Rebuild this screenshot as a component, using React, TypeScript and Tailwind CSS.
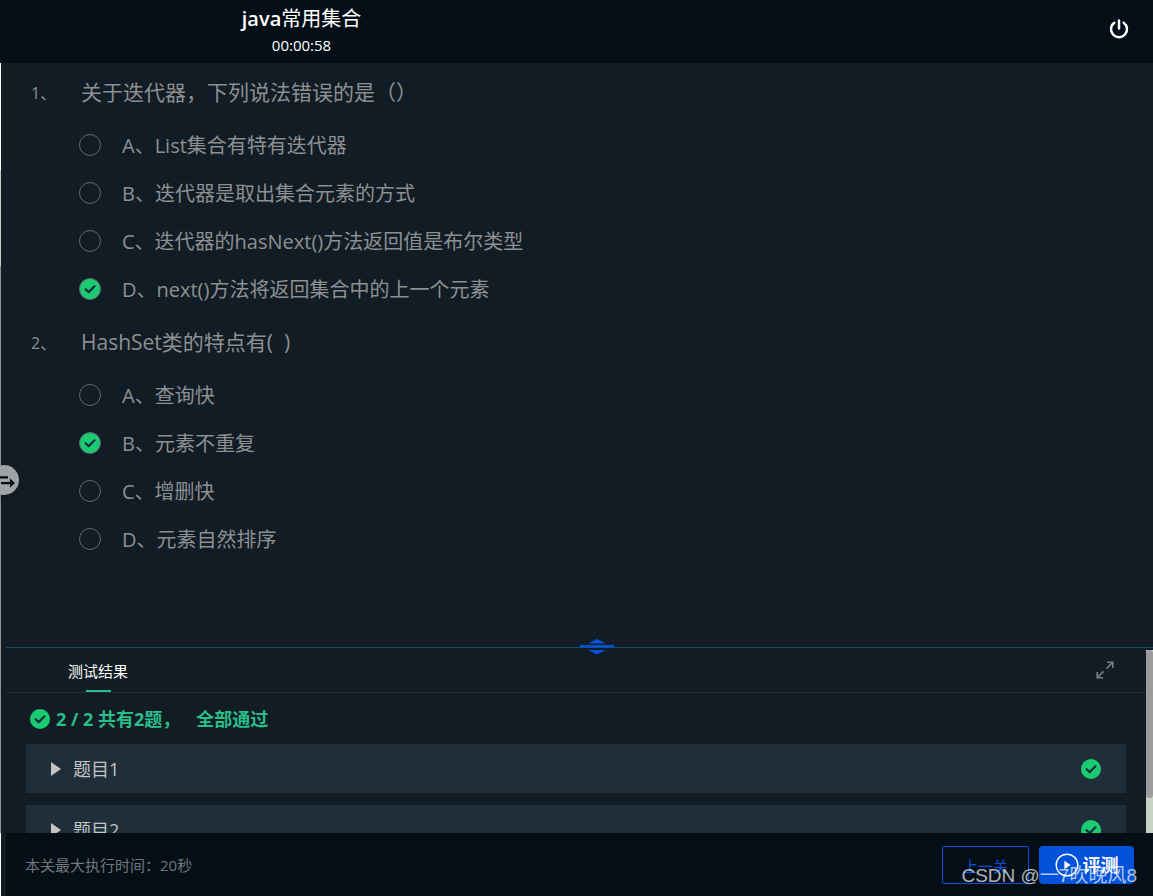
import { useState } from "react";

type Question = {
  id: number;
  title: string;
  options: string[];
  answer: number;
};

const questions: Question[] = [
  {
    id: 1,
    title: "关于迭代器，下列说法错误的是（）",
    options: [
      "List集合有特有迭代器",
      "迭代器是取出集合元素的方式",
      "迭代器的hasNext()方法返回值是布尔类型",
      "next()方法将返回集合中的上一个元素",
    ],
    answer: 3,
  },
  {
    id: 2,
    title: "HashSet类的特点有(\u00a0\u00a0)",
    options: ["查询快", "元素不重复", "增删快", "元素自然排序"],
    answer: 1,
  },
];

function Check({ className }: { className: string }) {
  return (
    <svg viewBox="0 0 20 20" className={className} aria-hidden="true">
      <path d="M5.6 10.2 8.7 13.1 14.5 7.3" fill="none" stroke="#12303c" strokeWidth="2.2" strokeLinecap="round" strokeLinejoin="round" />
    </svg>
  );
}

function PassedBadge() {
  return (
    <span className="flex size-5 shrink-0 items-center justify-center rounded-full bg-[#1acb71]">
      <Check className="size-5" />
    </span>
  );
}

function QuestionBlock({ question }: { question: Question }) {
  const [selected, setSelected] = useState(question.answer);
  return (
    <fieldset className="flex flex-col">
      <legend className="flex h-10 items-center text-[21px]">
        <span className="w-[50px] text-base">{question.id}、</span>
        <span>{question.title}</span>
      </legend>
      <div className="mt-2 flex flex-col pl-12">
        {question.options.map((option, index) => (
          <label key={option} className="flex h-12 cursor-pointer items-center text-xl">
            <span className="relative flex size-[22px] shrink-0">
              <input
                type="radio"
                name={`question-${question.id}`}
                checked={selected === index}
                onChange={() => setSelected(index)}
                className="size-[22px] appearance-none rounded-full border border-[#5d6b75] checked:bg-[#1acb71]"
              />
              {selected === index && <Check className="pointer-events-none absolute inset-px size-5" />}
            </span>
            <span className="ml-[21px] shrink-0 pt-0.5 whitespace-nowrap">{"ABCD"[index]}、</span>
            <span className="pt-0.5">{option}</span>
          </label>
        ))}
      </div>
    </fieldset>
  );
}

function ResultCard({ id }: { id: number }) {
  return (
    <li>
      <button type="button" aria-expanded="false" className="flex h-[49px] w-full items-center bg-[#202e3a] pr-[25px] pl-[25px] text-lg text-[#c3c5c7]">
        <svg viewBox="0 0 10 14" className="mr-3 h-3.5 w-2.5" aria-hidden="true">
          <path d="M0 0 10 7 0 14Z" fill="#c3c3c3" />
        </svg>
        <span className="flex-1 text-left">题目{id}</span>
        <PassedBadge />
      </button>
    </li>
  );
}

export default function App() {
  return (
    <div className="relative flex h-screen flex-col overflow-hidden bg-[#121c24] font-['Open_Sans','Noto_Sans_CJK_SC',sans-serif] text-[#8c9093]">
      <header className="flex h-[63px] shrink-0 items-center justify-between bg-[#040e17] pr-6 pb-0.5 text-white">
        <div className="flex w-[603px] flex-col items-center">
          <h1 className="text-xl leading-7 font-normal">
            <span className="font-semibold">java</span>常用集合
          </h1>
          <time className="text-[15px] leading-6">00:00:58</time>
        </div>
        <button type="button" aria-label="退出">
          <svg viewBox="0 0 20 20" className="-mt-1 size-5" fill="none" stroke="white" strokeWidth="2.5" strokeLinecap="round" aria-hidden="true">
            <path d="M10 1.4v8M5.3 3.7a8 8 0 1 0 9.4 0" />
          </svg>
        </button>
      </header>

      <div className="flex min-h-0 flex-1">
        <div className="flex w-px shrink-0 flex-col bg-white">
          <div className="mt-[107px] h-24 bg-[#c3cfc3]" />
          <div className="mb-[63px] flex-1 bg-[#909090]" />
        </div>

        <main className="flex min-w-0 flex-1 flex-col pl-[5px]">
          <section className="min-h-0 flex-1 overflow-hidden pl-[25px]">
            <form className="flex flex-col gap-2.5 pt-2.5">
              {questions.map((question) => (
                <QuestionBlock key={question.id} question={question} />
              ))}
            </form>
          </section>

          <section className="relative flex h-[186px] shrink-0 border-t border-[#144c70]">
            <svg viewBox="0 0 36 16" className="absolute -top-[9px] left-1/2 -ml-px h-4 w-9 cursor-row-resize" fill="#0352d9" aria-hidden="true">
              <path d="M9 4.5 18 0 27 4.5ZM1 6h34v2.5H1ZM9 11 18 15.5 27 11Z" />
            </svg>
            <div className="flex min-w-0 flex-1 flex-col">
              <div className="flex h-[45px] shrink-0 items-stretch justify-between border-b border-[#222e38] pr-8 pl-[62px]">
                <button type="button" className="flex flex-col items-center text-[15px] text-white">
                  <span className="flex flex-1 items-center pt-1">测试结果</span>
                  <span className="h-0.5 w-[25px] bg-[#29bd8b]" />
                </button>
                <button type="button" aria-label="展开" className="flex items-center">
                  <svg viewBox="0 0 18 18" className="size-[18px]" fill="none" stroke="#777d82" strokeWidth="1.6" aria-hidden="true">
                    <path d="M11 1.2h5.8V7M16.5 1.5 10.4 7.6M1.2 11v5.8H7M1.5 16.5l6.1-6.1" />
                  </svg>
                </button>
              </div>
              <div className="min-h-0 flex-1 overflow-hidden pr-5 pl-5">
                <p className="flex h-[51px] items-center pl-1 text-lg font-bold text-[#29bd8b]">
                  <PassedBadge />
                  <span className="mr-4 ml-1.5">2 / 2 共有2题，</span>
                  <span>全部通过</span>
                </p>
                <ul className="flex flex-col gap-3">
                  <ResultCard id={1} />
                  <ResultCard id={2} />
                </ul>
              </div>
            </div>
            <div className="mt-0.5 w-[7px] shrink-0 bg-[#c6d2c6]">
              <div className="h-[148px] rounded-full bg-[#9c9c9c]" />
            </div>
          </section>

          <footer className="flex h-[63px] shrink-0 items-center justify-between bg-[#040e17] pr-[19px] pl-[19px]">
            <p className="pt-0.5 text-[15px] text-[#71767b]">本关最大执行时间：20秒</p>
            <div className="flex gap-2.5">
              <button type="button" className="h-[38px] w-[87px] rounded-xs border border-[#0352d9] pt-1 text-[15px] text-[#0352d9]">
                上一关
              </button>
              <button type="button" className="flex h-[38px] w-[95px] items-center justify-center gap-1 rounded-sm bg-[#0352d9] text-lg font-bold text-white">
                <svg viewBox="0 0 24 24" className="size-6" fill="none" aria-hidden="true">
                  <circle cx="12" cy="12" r="10.8" stroke="white" strokeWidth="1.4" />
                  <path d="M9.4 7.8 15.6 12 9.4 16.2Z" fill="white" />
                </svg>
                评测
              </button>
            </div>
          </footer>
        </main>
      </div>

      <button
        type="button"
        aria-label="切换面板"
        className="absolute top-[465px] -left-[11px] flex size-[30px] items-center justify-end rounded-full bg-[#a0a3a6] pr-1 shadow-lg"
      >
        <svg viewBox="0 0 15 14" className="mt-0.5 h-3.5 w-[15px]" aria-hidden="true">
          <path d="M0 2.3h8v2.2H0ZM1 8h9V4.5L15 9l-5 4.5V10.2H1Z" fill="#080a0c" />
        </svg>
      </button>
      <p className="pointer-events-none absolute right-4 bottom-1 font-['Liberation_Sans','Noto_Sans_CJK_SC',sans-serif] text-[19px] leading-8 text-white/70">
        CSDN @一7吹晚风8
      </p>
    </div>
  );
}
